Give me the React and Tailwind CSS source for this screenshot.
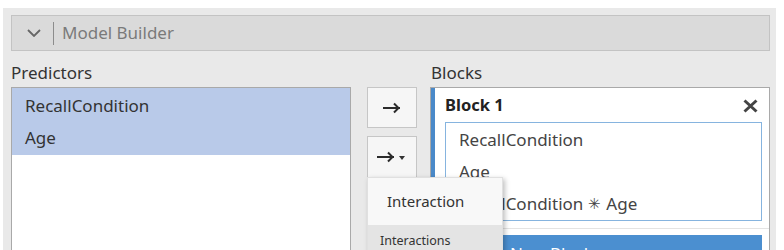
import React from 'react'

function Arrow({ className = '' }) {
  return (
    <svg width="18" height="12" viewBox="0 0 18 12" className={className} fill="none" stroke="#2b2b2b" strokeWidth="2" strokeLinecap="square">
      <path d="M1 6h15" />
      <path d="M11 1.5l4.5 4.5-4.5 4.5" strokeLinecap="butt" />
    </svg>
  )
}

export default function App() {
  return (
    <div className="w-[784px] h-[250px] overflow-hidden bg-white pt-[8px] pl-[3px] pr-[8px] font-['Noto_Sans',sans-serif] text-[#333]">
      <div className="h-[242px] bg-[#e9e9e9] pl-[8px] pr-[6px] pt-[7px]">
        {/* header */}
        <div className="h-[36px] flex items-center border border-[#c3c3c3] bg-[#dadada]">
          <svg width="14" height="8" viewBox="0 0 14 8" className="ml-[15px]" fill="none" stroke="#666" strokeWidth="1.8">
            <path d="M1 1l6 6 6-6" />
          </svg>
          <div className="w-px h-[23px] bg-[#8c8c8c] ml-[12px]" />
          <span className="ml-[8px] text-[17px] text-[#7a7a7a]">Model Builder</span>
        </div>

        <div className="flex mt-[8px]">
          {/* predictors */}
          <div className="w-[340px] flex flex-col">
            <div className="h-[28px] text-[17px] leading-[20px] pt-[4px]">Predictors</div>
            <div className="h-[200px] border border-[#a9a9a9] bg-white">
              <div className="bg-[#b9cae9] text-[17px]">
                <div className="h-[35px] flex items-center pl-[13px]">RecallCondition</div>
                <div className="h-[32px] flex items-center pl-[13px] pb-[2px]">Age</div>
              </div>
            </div>
          </div>

          {/* buttons */}
          <div className="relative w-[50px] ml-[16px] pt-[28px] flex flex-col gap-[8px]">
            <div className="h-[41px] border border-[#c6c6c6] bg-[#f6f6f6] flex items-center justify-center">
              <Arrow />
            </div>
            <div className="h-[48px] border border-[#c6c6c6] bg-[#f6f6f6] flex items-start justify-center pt-[14px] gap-[4px] pr-[3px]">
              <Arrow />
              <svg width="6" height="4" viewBox="0 0 6 4" className="mt-[5px]"><path d="M0 0h6L3 4z" fill="#333" /></svg>
            </div>

            {/* dropdown menu */}
            <div className="absolute left-0 top-[118px] w-[136px] bg-[#f8f8f8] shadow-[2px_2px_5px_rgba(0,0,0,0.25)] border border-[#e0e0e0] z-10">
              <div className="h-[47px] flex items-center pl-[19px] text-[15px] text-[#333]">Interaction</div>
              <div className="h-[40px] bg-[#e4e4e4] pl-[12px] pt-[7px] text-[12.5px] text-[#333]">Interactions</div>
            </div>
          </div>

          {/* blocks */}
          <div className="w-[340px] ml-[13px] flex flex-col">
            <div className="h-[28px] text-[17px] leading-[20px] pt-[4px] pl-px">Blocks</div>
            <div className="h-[200px] border border-[#a9a9a9] bg-white flex">
              <div className="w-[4px] h-[140px] bg-[#4a89c8]" />
              <div className="flex-1 pl-[10px] pr-[7px]">
                <div className="h-[34px] flex items-center justify-between">
                  <span className="text-[16.5px] font-bold text-[#222]">Block 1</span>
                  <svg width="15" height="14" viewBox="0 0 15 14" className="mr-[4px] mt-[2px]" stroke="#444" strokeWidth="3">
                    <path d="M1.5 1.5l12 11M13.5 1.5l-12 11" />
                  </svg>
                </div>
                <div className="h-[99px] border border-[#86b4df] pt-[1px] pl-[13px] text-[17px] text-[#444]">
                  <div className="h-[32px] flex items-center">RecallCondition</div>
                  <div className="h-[32px] flex items-center">Age</div>
                  <div className="h-[32px] flex items-center">RecallCondition <span className="font-['DejaVu_Sans'] text-[15px] mx-[5px] font-light">✳</span> Age</div>
                </div>
                <div className="h-px bg-[#e4e4e4] mt-[7px] -ml-[10px] -mr-[7px]" />
                <div className="h-[30px] mt-[6px] bg-[#4b8fd0] pl-[65px] pt-[6px] text-[17px] text-white">New Block</div>
              </div>
            </div>
          </div>
        </div>
      </div>
    </div>
  )
}
